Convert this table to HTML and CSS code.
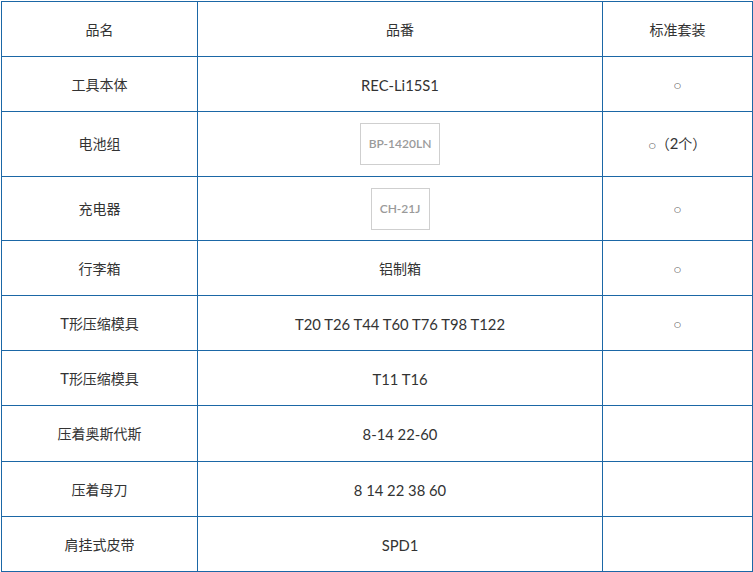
FILE: index.html
```html
<!DOCTYPE html>
<html lang="zh">
<head>
<meta charset="utf-8">
<title>配置</title>
<link rel="stylesheet" href="styles.css">
</head>
<body>
<table class="spec">
  <colgroup>
    <col class="c1"><col class="c2"><col class="c3">
  </colgroup>
  <tr><td>品名</td><td>品番</td><td>标准套装</td></tr>
  <tr><td>工具本体</td><td class="lat">REC-Li15S1</td><td><span class="dot">○</span></td></tr>
  <tr class="img-row"><td>电池组</td><td><span class="pic pic-bp">BP-1420LN</span></td><td><span class="dot">○</span>（<span class="lat">2</span>个）</td></tr>
  <tr class="img-row img-row2"><td>充电器</td><td><span class="pic pic-ch">CH-21J</span></td><td><span class="dot">○</span></td></tr>
  <tr><td>行李箱</td><td>铝制箱</td><td><span class="dot">○</span></td></tr>
  <tr><td><span class="lat">T</span>形压缩模具</td><td class="lat">T20 T26 T44 T60 T76 T98 T122</td><td><span class="dot">○</span></td></tr>
  <tr><td><span class="lat">T</span>形压缩模具</td><td class="lat">T11 T16</td><td></td></tr>
  <tr class="tall"><td>压着奥斯代斯</td><td class="lat">8-14 22-60</td><td></td></tr>
  <tr><td>压着母刀</td><td class="lat">8 14 22 38 60</td><td></td></tr>
  <tr><td>肩挂式皮带</td><td class="lat">SPD1</td><td></td></tr>
</table>
</body>
</html>
```
FILE: styles.css
```css
html, body {
  margin: 0;
  padding: 0;
  background: #fff;
}
body {
  padding: 1px 0 0 1px;
  font-family: Lato, "Noto Sans CJK SC", sans-serif;
  font-size: 14px;
  color: #333;
}
.spec {
  border-collapse: collapse;
  table-layout: fixed;
  width: 751px;
}
.c1 { width: 196px; }
.c2 { width: 405px; }
.c3 { width: 150px; }
.spec td {
  border: 1px solid #1b67a6;
  text-align: center;
  vertical-align: middle;
  height: 53px;
  padding: 1px 8px 0;
  line-height: 24px;
}
.spec .img-row td { height: 64px; padding-top: 0; }
.spec .img-row2 td { height: 63px; }
.spec .tall td { height: 54px; }
.lat {
  font-size: 14.8px;
}
.dot {
  font-family: "DejaVu Sans", sans-serif;
  font-size: 8px;
  vertical-align: 1px;
}
.pic {
  display: inline-block;
  vertical-align: middle;
  box-sizing: border-box;
  border: 1px solid #cfcfcf;
  height: 42px;
  line-height: 40px;
  font-size: 12px;
  font-weight: 600;
  color: #9a9a9a;
}
.pic-bp { width: 80px; }
.pic-ch { width: 59px; }
```
